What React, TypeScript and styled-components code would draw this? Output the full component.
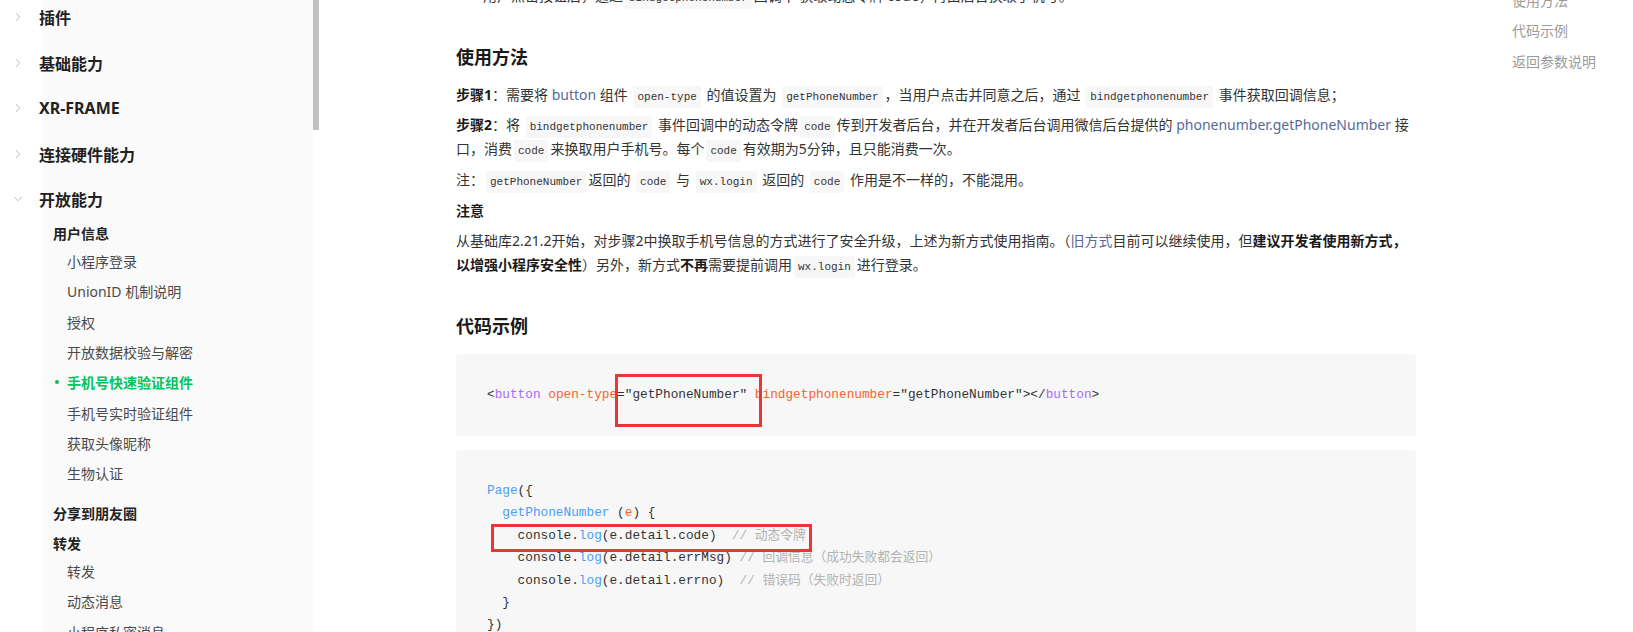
import React from 'react';
import styled, { createGlobalStyle, css } from 'styled-components';
import { ChevronRight, ChevronDown } from 'lucide-react';

const COLORS = {
  text: '#333333',
  title: '#1a1a1a',
  sub: '#4a4a4a',
  muted: '#9b9b9b',
  link: '#576b95',
  green: '#07c160',
  codeBg: '#f7f7f7',
  sideBg: '#fafafa',
  purple: '#a66bf6',
  orange: '#f4652c',
  blue: '#4a9ef5',
  comment: '#b3b3b3',
  mark: '#ef3434',
};

const GlobalStyle = createGlobalStyle`
  html, body {
    margin: 0;
    padding: 0;
    overflow: hidden;
    background: #ffffff;
  }
  body {
    font-family: "Noto Sans", "Noto Sans CJK SC", sans-serif;
    color: ${COLORS.text};
  }
  * { box-sizing: border-box; }
`;

type TopNav = { text: string; open?: boolean };
type SubNav = { title: string; items: { text: string; active?: boolean }[] };

const topRoutes: TopNav[] = [
  { text: '插件' },
  { text: '基础能力' },
  { text: 'XR-FRAME' },
  { text: '连接硬件能力' },
  { text: '开放能力', open: true },
];

const subGroups: SubNav[] = [
  {
    title: '用户信息',
    items: [
      { text: '小程序登录' },
      { text: 'UnionID 机制说明' },
      { text: '授权' },
      { text: '开放数据校验与解密' },
      { text: '手机号快速验证组件', active: true },
      { text: '手机号实时验证组件' },
      { text: '获取头像昵称' },
      { text: '生物认证' },
    ],
  },
  { title: '分享到朋友圈', items: [] },
  {
    title: '转发',
    items: [{ text: '转发' }, { text: '动态消息' }, { text: '小程序私密消息' }],
  },
];

const Page = styled.div`
  width: 1633px;
  height: 632px;
  display: flex;
  overflow: hidden;
`;

const Sidebar = styled.aside`
  width: 313px;
  flex-shrink: 0;
  background: linear-gradient(to right, #ffffff 42px, ${COLORS.sideBg} 42px);
  overflow: hidden;
`;

const NavTree = styled.nav`
  margin-top: -5.5px;
  display: flex;
  flex-direction: column;
`;

const TopItem = styled.div`
  height: 45.5px;
  display: flex;
  align-items: center;
  gap: 14px;
  padding-left: 11px;
  color: #b5b5b5;
`;

const TopLabel = styled.span`
  font-size: 16px;
  font-weight: 700;
  color: #222222;
`;

const SubGroup = styled.div`
  display: flex;
  flex-direction: column;
  & + & { padding-top: 6px; }
`;

const GroupTitle = styled.div`
  height: 24px;
  line-height: 24px;
  padding-left: 53px;
  font-size: 14px;
  font-weight: 700;
  color: #222222;
`;

const SubList = styled.div`
  display: flex;
  flex-direction: column;
  padding-bottom: 7.6px;
  &:empty { padding-bottom: 0; }
`;

const SubItem = styled.div<{ $active?: boolean }>`
  height: 30.3px;
  display: flex;
  align-items: center;
  padding-left: 67px;
  font-size: 14px;
  color: ${COLORS.sub};
  white-space: nowrap;
  ${({ $active }) => $active && css`
    color: ${COLORS.green};
    font-weight: 700;
    &::before {
      content: '';
      width: 4px;
      height: 4px;
      border-radius: 50%;
      background: ${COLORS.green};
      margin-left: -12px;
      margin-right: 8px;
    }
  `}
`;

const ScrollTrack = styled.div`
  width: 6px;
  flex-shrink: 0;
  display: flex;
  flex-direction: column;
`;

const ScrollThumb = styled.div`
  height: 130px;
  background: #c1c1c1;
`;

const Main = styled.main`
  flex: 1;
  display: flex;
  padding-left: 137px;
  overflow: hidden;
`;

const Article = styled.article`
  width: 960px;
  flex-shrink: 0;
  margin-top: -16px;
  font-size: 14px;
  line-height: 23.6px;
`;

const IntroList = styled.ul`
  margin: 0 0 7.2px;
  padding-left: 27px;
`;

const H2 = styled.h2`
  margin: 35px 0 12px;
  font-size: 18px;
  line-height: 28px;
  font-weight: 700;
  color: ${COLORS.title};
`;

const P = styled.p`
  margin: 0 0 7.2px;
`;

const B = styled.b`
  font-weight: 700;
  color: ${COLORS.title};
`;

const A = styled.a`
  color: ${COLORS.link};
  text-decoration: none;
`;

const Code = styled.code`
  font-family: "Liberation Mono", monospace;
  font-size: 11px;
  line-height: 1;
  padding: 5px 4px;
  margin: 0 2px;
  background: ${COLORS.codeBg};
  border-radius: 2px;
  color: ${COLORS.text};
`;

const Pre = styled.pre`
  position: relative;
  margin: 14px 0;
  padding: 30px 31px;
  background: ${COLORS.codeBg};
  border-radius: 3px;
  font-family: "Liberation Mono", "Noto Sans CJK SC", monospace;
  font-size: 12.75px;
  line-height: 22.4px;
  color: ${COLORS.text};
  white-space: pre;
`;

const Tok = styled.span<{ $kind: 'tag' | 'attr' | 'fn' | 'param' | 'comment' }>`
  color: ${({ $kind }) =>
    $kind === 'tag' ? COLORS.purple
      : $kind === 'attr' || $kind === 'param' ? COLORS.orange
      : $kind === 'fn' ? COLORS.blue
      : COLORS.comment};
`;

const Mark = styled.div`
  position: absolute;
  border: 3px solid ${COLORS.mark};
  pointer-events: none;
`;

const Toc = styled.nav`
  margin-left: 96px;
  margin-top: -14.3px;
  display: flex;
  flex-direction: column;
`;

const TocItem = styled.div`
  height: 30.6px;
  line-height: 30.6px;
  font-size: 14px;
  color: ${COLORS.muted};
  white-space: nowrap;
`;

const App = () => (
  <Page>
    <GlobalStyle />
    <Sidebar>
      <NavTree>
        {topRoutes.map((route) => (
          <TopItem key={route.text}>
            {route.open ? <ChevronDown size={14} strokeWidth={1.6} /> : <ChevronRight size={14} strokeWidth={1.6} />}
            <TopLabel>{route.text}</TopLabel>
          </TopItem>
        ))}
        {subGroups.map((group) => (
          <SubGroup key={group.title}>
            <GroupTitle>{group.title}</GroupTitle>
            <SubList>
              {group.items.map((item) => (
                <SubItem key={`${group.title}-${item.text}`} $active={item.active}>{item.text}</SubItem>
              ))}
            </SubList>
          </SubGroup>
        ))}
      </NavTree>
    </Sidebar>
    <ScrollTrack>
      <ScrollThumb />
    </ScrollTrack>

    <Main>
      <Article>
        <IntroList>
          <li>用户点击按钮后，通过<Code>bindgetphonenumber</Code>回调中 获取动态令牌 code，再由后台换取手机号。</li>
        </IntroList>

        <H2>使用方法</H2>
        <P>
          <B>步骤1</B>：需要将 <A>button</A> 组件 <Code>open-type</Code> 的值设置为 <Code>getPhoneNumber</Code>，当用户点击并同意之后，通过 <Code>bindgetphonenumber</Code> 事件获取回调信息；
        </P>
        <P>
          <B>步骤2</B>：将 <Code>bindgetphonenumber</Code> 事件回调中的动态令牌<Code>code</Code>传到开发者后台，并在开发者后台调用微信后台提供的 <A>phonenumber.getPhoneNumber</A> 接<br />
          口，消费<Code>code</Code>来换取用户手机号。每个<Code>code</Code>有效期为5分钟，且只能消费一次。
        </P>
        <P>
          注：<Code>getPhoneNumber</Code>返回的 <Code>code</Code> 与 <Code>wx.login</Code> 返回的 <Code>code</Code> 作用是不一样的，不能混用。
        </P>
        <P><B>注意</B></P>
        <P>
          从基础库2.21.2开始，对步骤2中换取手机号信息的方式进行了安全升级，上述为新方式使用指南。（<A>旧方式</A>目前可以继续使用，但<B>建议开发者使用新方式，</B><br />
          <B>以增强小程序安全性</B>）另外，新方式<B>不再</B>需要提前调用<Code>wx.login</Code>进行登录。
        </P>

        <H2>代码示例</H2>
        <Pre>
          {'<'}<Tok $kind="tag">button</Tok> <Tok $kind="attr">open-type</Tok>="getPhoneNumber" <Tok $kind="attr">bindgetphonenumber</Tok>="getPhoneNumber"{'></'}<Tok $kind="tag">button</Tok>{'>'}
          <Mark style={{ left: 159, top: 20.6, width: 147, height: 52.7 }} />
        </Pre>
        <Pre>
          <Tok $kind="fn">Page</Tok>{'({\n  '}<Tok $kind="fn">getPhoneNumber</Tok> (<Tok $kind="param">e</Tok>) {'{\n    '}
          console.<Tok $kind="fn">log</Tok>(e.detail.code)  <Tok $kind="comment">// 动态令牌</Tok>{'\n    '}
          console.<Tok $kind="fn">log</Tok>(e.detail.errMsg) <Tok $kind="comment">// 回调信息（成功失败都会返回）</Tok>{'\n    '}
          console.<Tok $kind="fn">log</Tok>(e.detail.errno)  <Tok $kind="comment">// 错误码（失败时返回）</Tok>{'\n  }\n})'}
          <Mark style={{ left: 34.5, top: 74, width: 321.5, height: 27.7 }} />
        </Pre>
      </Article>

      <Toc>
        <TocItem>使用方法</TocItem>
        <TocItem>代码示例</TocItem>
        <TocItem>返回参数说明</TocItem>
      </Toc>
    </Main>
  </Page>
);

export default App;
